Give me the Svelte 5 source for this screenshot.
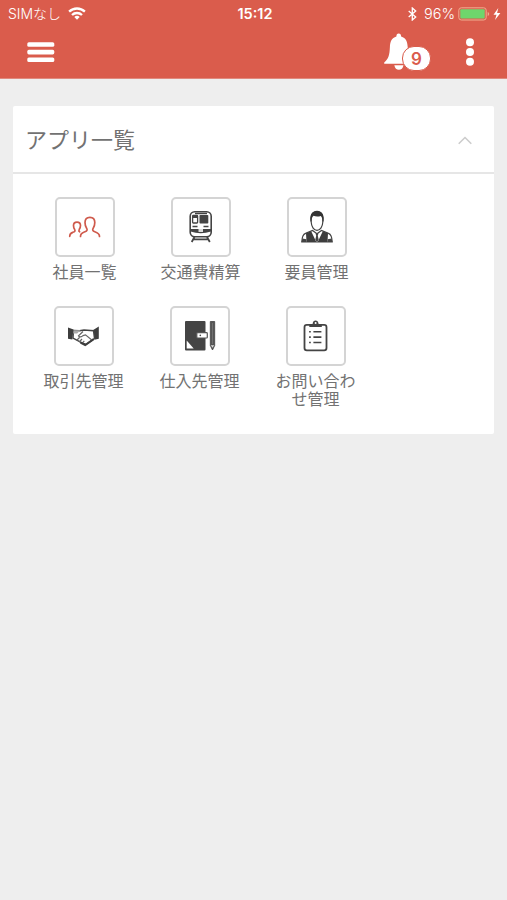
<script lang="ts">
  let open = $state(true);

  const rows = [
    [
      { icon: "people", label: "社員一覧" },
      { icon: "train", label: "交通費精算" },
      { icon: "man", label: "要員管理" },
    ],
    [
      { icon: "handshake", label: "取引先管理" },
      { icon: "notebook", label: "仕入先管理" },
      { icon: "clipboard", label: "お問い合わせ管理" },
    ],
  ];
</script>

<main class="screen">
  <header class="header">
    <div class="statusBar">
      <div class="carrier">
        <span>SIMなし</span>
        <svg width="18" height="13" viewBox="0 0 18 13" fill="none" stroke="#fff" stroke-width="2.3">
          <path d="M1.1 4.7a11.4 11.4 0 0 1 15.8 0" />
          <path d="M4 8a7.2 7.2 0 0 1 10 0" />
          <path d="M6.3 9.9a4 4 0 0 1 5.4 0L9 12.7z" fill="#fff" stroke="none" />
        </svg>
      </div>
      <div class="clock">15:12</div>
      <div class="power">
        <svg width="9" height="14" viewBox="0 0 9 14" fill="none" stroke="#fff" stroke-width="1.3">
          <path d="M.7 4l7 6-3.4 3V1l3.400 3-7 6" />
        </svg>
        <span class="percent">96%</span>
        <svg width="44" height="14" viewBox="0 0 44 14">
          <rect x=".8" y=".8" width="27.4" height="12.2" rx="2.5" fill="none" stroke="#efad90" />
          <rect x="2.3" y="2.3" width="24.4" height="9.2" rx="1" fill="#6ed66c" />
          <path d="M29.7 5v4q1.5-.5 1.5-2t-1.5-2z" fill="#efad90" />
          <path d="M40.3 1L35.5 7.7h3L37 13l5.400-7h-3.300z" fill="#fff" />
        </svg>
      </div>
    </div>
    <div class="toolbar">
      <button class="iconButton" type="button" aria-label="メニュー">
        <svg width="28" height="22" viewBox="0 0 28 22" fill="#fff">
          <rect x=".3" y="1.2" width="27" height="4.6" rx="1.6" />
          <rect x=".3" y="8.8" width="27" height="4.6" rx="1.6" />
          <rect x=".3" y="16.4" width="27" height="4.6" rx="1.6" />
        </svg>
      </button>
      <div class="actions">
        <button class="iconButton bell" type="button" aria-label="お知らせ">
          <svg width="31" height="38" viewBox="0 0 31 38" fill="#fff">
            <path
              d="M14.7.6c1.6 0 2.4 1.2 2.4 2.8 4.9 1.4 6.4 5.4 6.6 10.6.4 8 .8 11.5 5.7 15.6v1.1H.2v-1.1c4.6-4.1 5.3-7.6 5.7-15.6.2-5.2 1.7-9.2 6.500-10.600 0-1.600.7-2.800 2.300-2.800z"
            />
            <path d="M10.300 32.200h9.200c-.6 3-2.200 4.600-4.600 4.600s-4-1.600-4.600-4.600z" />
          </svg>
          <span class="badge">9</span>
        </button>
        <button class="iconButton" type="button" aria-label="その他">
          <svg width="10" height="30" viewBox="0 0 10 30" fill="#fff">
            <circle cx="5" cy="5.3" r="4" />
            <circle cx="5" cy="15" r="4" />
            <circle cx="5" cy="24.8" r="4" />
          </svg>
        </button>
      </div>
    </div>
  </header>

  <section class="panel">
    <button class="panelHeader" type="button" onclick={() => (open = !open)}>
      <span>アプリ一覧</span>
      <svg class:closed={!open} width="14" height="9" viewBox="0 0 14 9" fill="none" stroke="#ccc" stroke-width="1.6">
        <path d="M.7 7.7L7 1.500l6.300 6.200" />
      </svg>
    </button>
    {#if open}
      <div class="panelBody">
        {#each rows as row}
          <div class="row">
            {#each row as app}
              <div class="app">
                <div class="tile">
                  <svg width="60" height="60" viewBox="0 0 60 60">
                    {#if app.icon === "people"}
                      <g fill="none" stroke="#cf5a4c" stroke-width="1.7" stroke-linecap="round">
                        <path
                          d="M25.500 39.500c0-3.500 2-3.800 4.500-4.700 2.300-.8 2.500-2 1.600-3.600C30.400 29.500 30 27.500 30 25.500c0-3.300 1.900-5.200 4.900-5.200s4.900 1.900 4.900 5.200c0 2-.4 4-1.600 5.700-.9 1.600-.7 2.800 1.600 3.600 2.500.9 4.700 1.400 4.700 4.700"
                        />
                        <path
                          d="M14.700 39.300c0-2.900 1.300-3.300 3.200-4 2-.7 2.500-1.400 1.800-2.700-.9-1.300-1.200-2.500-1.200-4 0-2.200 1.300-3.400 3.500-3.400s3.500 1.200 3.500 3.400c0 1.500-.4 2.700-1.300 4-.6 1-.4 1.700.4 2.200"
                        />
                      </g>
                    {:else if app.icon === "train"}
                      <rect x="19.2" y="14.8" width="21" height="25" rx="4.5" fill="#fff" stroke="#444" stroke-width="1.6" />
                      <path d="M24 16.500h12" stroke="#444" stroke-width="1.5" />
                      <rect x="21.6" y="18.5" width="5" height="7.5" rx=".7" fill="#fff" stroke="#444" stroke-width="1.3" />
                      <path d="M22 18.500h4.200v2.500H22z" fill="#444" />
                      <rect x="28.5" y="18" width="8.8" height="8.5" rx=".8" fill="#444" />
                      <path d="M21.500 29.500h5M32.500 29.500h5" stroke="#444" stroke-width="1.6" />
                      <path d="M19.500 32h20.500v2.500q-10.200 3.500-20.500 0z" fill="#444" />
                      <path d="M27.500 32h4.500v3h-4.500z" fill="#ddd" />
                      <path d="M23.500 40l-2.800 5M36 40l2.800 5M22.500 42.300H37" fill="none" stroke="#444" stroke-width="1.8" />
                    {:else if app.icon === "man"}
                      <path
                        d="M24.200 25c-.7-6 .8-10.500 5.800-10.700 5 .2 6.500 4.700 5.800 10.700-.2 4.500-2.500 8.300-5.800 8.300s-5.600-3.800-5.800-8.300z"
                        fill="#fff"
                        stroke="#444"
                        stroke-width="1.2"
                      />
                      <path d="M23.500 24.500c-.8-6 .8-10.200 6.500-10.500 5.700.3 7.300 4.500 6.500 10.500h-1c0-2.500-.5-4.500-1.700-5.500-2.500.8-5.500.7-7.200-.2-1.500 1-2.100 3.200-2.100 5.700z" fill="#333" />
                      <path d="M14.800 45c.2-5 .8-7.500 3.700-8.600l7-2.900 4.500 3.300 4.500-3.300 7 2.900c2.900 1.100 3.500 3.600 3.700 8.600z" fill="#fff" stroke="#444" stroke-width="1.2" />
                      <path d="M19 36.200l5.200-1.900L29.300 45H19.500zM41 36.200l-5.200-1.900L30.700 45h9.800z" fill="#3d3d3d" />
                      <path d="M14.500 45l.9-3.500 4 .8V45zM45.500 45l-.9-3.500-4 .8V45z" fill="#444" />
                      <path d="M28.600 36.500h2.800l-.6 2.300.9 4L30 45l-1.700-2.200.9-4z" fill="#444" />
                    {:else if app.icon === "handshake"}
                      <path d="M14 21.500l5.500 2-1.200 10-4.300-.8zM44.800 20.500l-5.600 3.400 1.300 9.800 4.300-1z" fill="#3d3d3d" />
                      <path d="M19.500 24.500l6 .2 4.500-.7 9.500.7 1 7.800-8.500 6-5-2.200-8-4.300z" fill="#fff" stroke="#444" stroke-width="1.400" />
                      <path d="M19.500 24.200h7l-3.300 3.200-4 .1z" fill="#aaa" />
                      <path d="M29 25.500l-4.500 4.300c1 1.500 3 1.200 4.500-.2l2.500-.7 6 4.800M22.500 34.500l3-3M25.200 36l2.800-3M28.300 37.200l2-2.400" fill="none" stroke="#666" stroke-width="1.2" />
                      <path d="M26.500 36.500l4.700 2.600 8.500-6" fill="none" stroke="#3d3d3d" stroke-width="2" />
                    {:else if app.icon === "notebook"}
                      <rect x="15" y="15" width="20.5" height="29.5" rx="1" fill="#444" />
                      <path d="M16.700 34.500v8h7z" fill="#fff" />
                      <rect x="26.8" y="26.700" width="10.5" height="5.3" rx=".8" fill="#fff" stroke="#555" stroke-width="1.2" />
                      <circle cx="30.3" cy="29.4" r=".8" fill="#444" />
                      <path d="M40.300 15.500h4.400v24L42.500 44l-2.200-4.500z" fill="#555" stroke="#444" stroke-width=".8" />
                      <path d="M42.500 17v21" stroke="#777" stroke-width=".8" />
                      <path d="M40.800 39.200h3.400l-1.700 2.500z" fill="#ddd" />
                    {:else}
                      <rect x="18.5" y="18.9" width="22" height="25.5" rx="2.3" fill="none" stroke="#444" stroke-width="1.8" />
                      <path d="M23.300 20.900v-3h3.300c.2-4.500 5.700-4.500 6 0h3.200v3z" fill="#444" />
                      <circle cx="29.6" cy="16.9" r="1" fill="#fff" />
                      <path d="M27.400 25.700h8M27.400 31.100h8M27.400 36.500h8" stroke="#444" stroke-width="1.6" />
                      <path d="M23.100 25.700h1.700M23.100 31.100h1.700M23.100 36.500h1.700" stroke="#444" stroke-width="1.6" />
                    {/if}
                  </svg>
                </div>
                <span class="label">{app.label}</span>
              </div>
            {/each}
          </div>
        {/each}
      </div>
    {/if}
  </section>
</main>

<style>
  :global(body) {
    background: #eee;
  }

  .screen {
    min-height: 900px;
    background: #eee;
    color: #727272;
    font-family: Inter, "Noto Sans CJK JP", sans-serif;
  }

  .header {
    height: 79px;
    background: #da5c4c;
    color: #fff;
    border-bottom: 1px solid #e08a7e;
    box-sizing: border-box;
  }

  .statusBar {
    display: grid;
    grid-template-columns: 1fr auto 1fr;
    align-items: center;
    height: 27px;
    padding: 0 5px 0 8px;
    font-size: 14px;
    line-height: 20px;
  }

  .carrier,
  .power {
    display: flex;
    align-items: center;
    white-space: nowrap;
  }

  .carrier {
    gap: 7px;
    font-weight: 300;
  }

  .clock {
    font-weight: 600;
    font-size: 14.5px;
  }

  .power {
    justify-content: flex-end;
  }

  .percent {
    margin: 0 3px 0 7px;
    font-size: 14.5px;
    font-weight: 300;
  }

  .toolbar {
    display: flex;
    justify-content: space-between;
    align-items: center;
    height: 50px;
    padding: 0 32px 0 27px;
  }

  .actions {
    display: flex;
    align-items: center;
    gap: 35px;
  }

  .iconButton {
    display: flex;
    padding: 0;
    border: none;
    background: none;
    cursor: pointer;
  }

  .bell {
    position: relative;
    width: 46px;
  }

  .badge {
    position: absolute;
    left: 18px;
    top: 13px;
    width: 29px;
    height: 25px;
    box-sizing: border-box;
    border: 1px solid #da5c4c;
    border-radius: 12px;
    background: #fff;
    color: #da5c4c;
    font-family: Inter, sans-serif;
    font-size: 17px;
    font-weight: 600;
    line-height: 24px;
    text-align: center;
  }

  .panel {
    margin: 27px 13px 0;
    background: #fff;
    border-radius: 2px;
  }

  .panelHeader {
    display: flex;
    justify-content: space-between;
    align-items: center;
    width: 100%;
    height: 68px;
    padding: 0 22px 3px 12px;
    border: none;
    border-bottom: 2px solid #e6e6e6;
    background: none;
    color: #727272;
    font-family: "Noto Sans CJK JP", sans-serif;
    font-size: 22px;
    font-weight: 400;
    cursor: pointer;
  }

  .panelHeader svg {
    margin-top: 5px;
  }

  .closed {
    transform: rotate(180deg);
  }

  .panelBody {
    display: flex;
    flex-direction: column;
    height: 260px;
    box-sizing: border-box;
    padding: 23px 0 0 12.5px;
  }

  .row {
    display: flex;
    height: 109px;
    padding-left: 1px;
  }

  .row + .row {
    padding-left: 0;
  }

  .app {
    display: flex;
    flex-direction: column;
    align-items: center;
    width: 116px;
  }

  .tile {
    width: 60px;
    height: 60px;
    box-sizing: border-box;
    border: 2px solid #d4d4d4;
    border-radius: 5px;
  }

  .tile svg {
    display: block;
    margin: -2px;
  }

  .label {
    width: 82px;
    margin-top: 5px;
    font-family: "Noto Sans CJK JP", sans-serif;
    font-size: 16px;
    font-weight: 400;
    line-height: 18px;
    text-align: center;
  }
</style>
